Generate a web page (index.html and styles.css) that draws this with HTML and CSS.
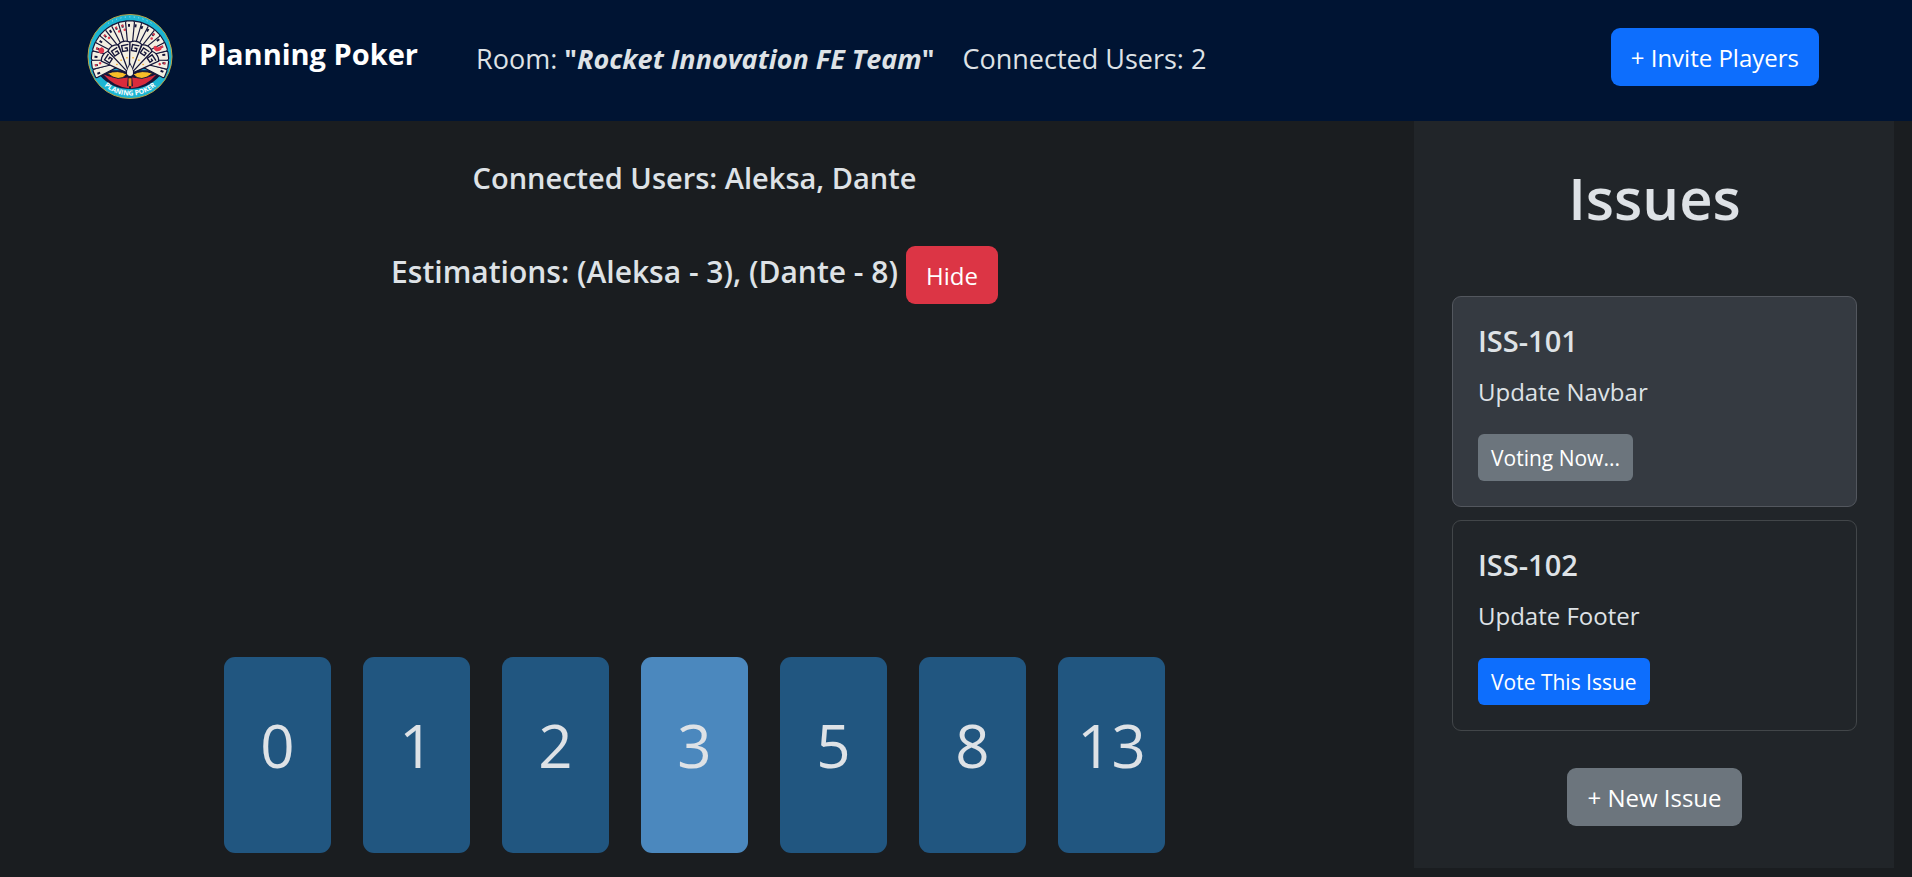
FILE: index.html
```html
<!DOCTYPE html>
<html lang="en">
  <head>
    <meta charset="utf-8">
    <title>Planning Poker</title>
    <link rel="stylesheet" href="styles.css">
  </head>
  <body>
    <nav class="navbar">
      <a class="brand" href="#">
        <svg class="logo" viewBox="0 0 86 86" aria-hidden="true">
          <defs>
            <clipPath id="inner"><circle cx="43" cy="43" r="36"/></clipPath>
            <path id="ring" d="M3.5 43a39.5 39.5 0 0 0 79 0"/>
            <g id="card">
              <path d="M41.5 40L38.500 8.500q0-1.500 1.500-1.500h6q1.500 0 1.500 1.500L44.500 40z" fill="#f3efe2" stroke="#15163a" stroke-width="1.200"/>
              <path d="M41 10h2v3h-2z" fill="#15163a"/>
            </g>
            <g id="red">
              <use href="#card"/>
              <path d="M41 10h2v2h-2z" fill="#e3384d"/>
              <circle cx="43.500" cy="15.500" r="1.300" fill="#e3384d"/>
            </g>
            <g id="key">
              <path d="M41.500 56L37 29q6-4 12 0L44.500 56z" fill="#f3efe2" stroke="#15163a" stroke-width="1.300"/>
              <path d="M47 31h-7v6h5v-3h-2.500" fill="none" stroke="#15163a" stroke-width="1.400"/>
              <circle cx="43" cy="44" r=".8" fill="#f4a51c"/>
            </g>
          </defs>
          <circle cx="43" cy="43" r="42.500" fill="#1cb5d3" stroke="#b9a545" stroke-width="1"/>
          <path d="M21 9.500a40 40 0 0 1 44 0" fill="none" stroke="#b4ebf2" stroke-width="1" stroke-dasharray="1 3.500"/>
          <g clip-path="url(#inner)">
            <path d="M12 38h62v24q-13 14-31 14T12 62z" fill="#15163a"/>
            <path d="M16 61q13 6 26 3v11q-15-1-26-14z" fill="#d92b3c"/>
            <path d="M70 61q-13 6-26 3v11q15-1 26-14z" fill="#d92b3c"/>
            <path d="M20 60q11-4 20 1-8 9-20-1z" fill="#f8bd28" stroke="#15163a"/>
            <path d="M66 60q-11-4-20 1 8 9 20-1z" fill="#f8bd28" stroke="#15163a"/>
            <path d="M24 57q8-4 14 0zM62 57q-8-4-14 0z" fill="#1c9dc3"/>
          </g>
          <use href="#card" transform="rotate(-112 43 46)"/>
          <use href="#card" transform="rotate(112 43 46)"/>
          <use href="#red" transform="rotate(-98 43 46)"/>
          <use href="#red" transform="rotate(98 43 46)"/>
          <use href="#card" transform="rotate(-84 43 46)"/>
          <use href="#card" transform="rotate(84 43 46)"/>
          <use href="#red" transform="rotate(-70 43 46)"/>
          <use href="#red" transform="rotate(70 43 46)"/>
          <use href="#card" transform="rotate(-57 43 46)"/>
          <use href="#card" transform="rotate(57 43 46)"/>
          <use href="#red" transform="rotate(-45 43 46)"/>
          <use href="#red" transform="rotate(45 43 46)"/>
          <use href="#card" transform="rotate(-33 43 46)"/>
          <use href="#card" transform="rotate(33 43 46)"/>
          <use href="#red" transform="rotate(-22 43 46)"/>
          <use href="#card" transform="rotate(22 43 46)"/>
          <use href="#red" transform="rotate(-11 43 46)"/>
          <use href="#card" transform="rotate(11 43 46)"/>
          <use href="#card"/>
          <circle cx="14" cy="37" r="2.900" fill="#e3384d"/>
          <path d="M70 38q-4-2-3-5 2-2 4 1 3-2 4 0 1 3-5 4z" fill="#e3384d"/>
          <use href="#key" transform="rotate(-56 43 60)"/>
          <use href="#key" transform="rotate(56 43 60)"/>
          <use href="#key" transform="rotate(-34 43 60)"/>
          <use href="#key" transform="rotate(34 43 60)"/>
          <use href="#key" transform="rotate(-11 43 60)"/>
          <use href="#key" transform="rotate(11 43 60)"/>
          <path d="M43 49q-5 9-2 13l-1 11h6l-1-11q3-4-2-13z" fill="#15163a"/>
          <path d="M43 51q-5 8-2 11 2 1.500 4 0 3-3-2-11z" fill="#f3efe2"/>
          <path d="M41.500 65h3v8h-3z" fill="#f07f25"/>
          <text class="logo-text" text-anchor="middle"><textPath href="#ring" startOffset="50%">PLANING POKER</textPath></text>
        </svg>
        <span class="brand-name">Planning Poker</span>
      </a>
      <div class="room">
        <span>Room: <b>"<i>Rocket Innovation FE Team</i>"</b></span>
        <span class="count">Connected Users: 2</span>
      </div>
      <button class="btn btn-primary" type="button">+ Invite Players</button>
    </nav>
    <div class="content">
      <main class="table">
        <h4>Connected Users: Aleksa, Dante</h4>
        <div class="estimations">
          <h4>Estimations: (Aleksa - 3), (Dante - 8)</h4>
          <button class="btn btn-danger" type="button">Hide</button>
        </div>
        <div class="cards">
          <button class="poker-card" type="button">0</button>
          <button class="poker-card" type="button">1</button>
          <button class="poker-card" type="button">2</button>
          <button class="poker-card selected" type="button">3</button>
          <button class="poker-card" type="button">5</button>
          <button class="poker-card" type="button">8</button>
          <button class="poker-card" type="button">13</button>
        </div>
      </main>
      <aside class="issues">
        <h1>Issues</h1>
        <div class="issue active">
          <h5>ISS-101</h5>
          <p>Update Navbar</p>
          <button class="btn btn-sm btn-secondary" type="button">Voting Now...</button>
        </div>
        <div class="issue">
          <h5>ISS-102</h5>
          <p>Update Footer</p>
          <button class="btn btn-sm btn-primary" type="button">Vote This Issue</button>
        </div>
        <button class="btn btn-secondary new-issue" type="button">+ New Issue</button>
      </aside>
    </div>
  </body>
</html>
```
FILE: styles.css
```css
* { box-sizing: border-box; }
body {
  display: flex;
  flex-direction: column;
  min-height: 100vh;
  margin: 0;
  background-color: #1a1d20;
  color: #dee2e6;
  font-family: "Open Sans", "Noto Sans", sans-serif;
  font-size: 24px;
  line-height: 36px;
}
h1, h4, h5, p { margin: 0; }
h4, h5 { font-size: 29px; font-weight: 600; line-height: 36px; }

/* navbar */
.navbar {
  display: flex;
  align-items: center;
  padding: 14px 93px 22px 87px;
  background-color: #001433;
}
.brand { display: flex; align-items: center; gap: 26px; color: #fff; text-decoration: none; }
.brand-name { padding-bottom: 6px; font-size: 29px; font-weight: 700; }
.logo { display: block; width: 86px; height: 85px; }
.logo-text { fill: #fff; font-size: 7px; font-weight: 700; }
.room { display: flex; flex: 1; gap: 28px; padding: 4px 0 0 58px; font-size: 27px; }
.count { font-weight: 500; }

/* buttons */
.btn {
  padding: 12px 20px 10px;
  border: 0;
  border-radius: 9px;
  color: #fff;
  font-family: inherit;
  font-size: 24px;
  line-height: 36px;
  cursor: pointer;
}
.btn-sm { padding: 6px 13px 5px; border-radius: 6px; font-size: 21px; }
.btn-primary { background-color: #0d6efd; }
.btn-secondary { background-color: #6c757d; }
.btn-danger { background-color: #dc3545; }

/* table */
.content { display: flex; flex: 1; }
.table {
  display: flex;
  flex: 1;
  flex-direction: column;
  align-items: center;
  padding: 39px 25px 24px 0;
}
.estimations { display: flex; gap: 8px; margin-top: 50px; }
.estimations h4 { padding-top: 8px; font-size: 30px; }
.cards { display: flex; gap: 32px; margin-top: auto; }
.poker-card {
  width: 107px;
  height: 196px;
  padding: 0 0 20px;
  border: 0;
  border-radius: 11px;
  background-color: #215680;
  color: #dee2e6;
  font-family: inherit;
  font-size: 60px;
  cursor: pointer;
}
.poker-card.selected { background-color: #4b88be; }

/* issues */
.issues {
  display: flex;
  flex-direction: column;
  width: 480px;
  margin: 0 18px 9px 0;
  padding: 39px 37px 40px 38px;
  background-color: #212529;
}
.issues h1 { margin-bottom: 60px; font-size: 58px; font-weight: 600; line-height: 76px; text-align: center; }
.issue { margin-bottom: 13px; padding: 25px; border: 1px solid #424649; border-radius: 9px; }
.issue.active { background-color: #353a41; border-color: #53575e; }
.issue h5 { margin-bottom: 14px; line-height: 38px; }
.issue p { margin-bottom: 24px; }
.new-issue { align-self: center; margin-top: 24px; }
```
